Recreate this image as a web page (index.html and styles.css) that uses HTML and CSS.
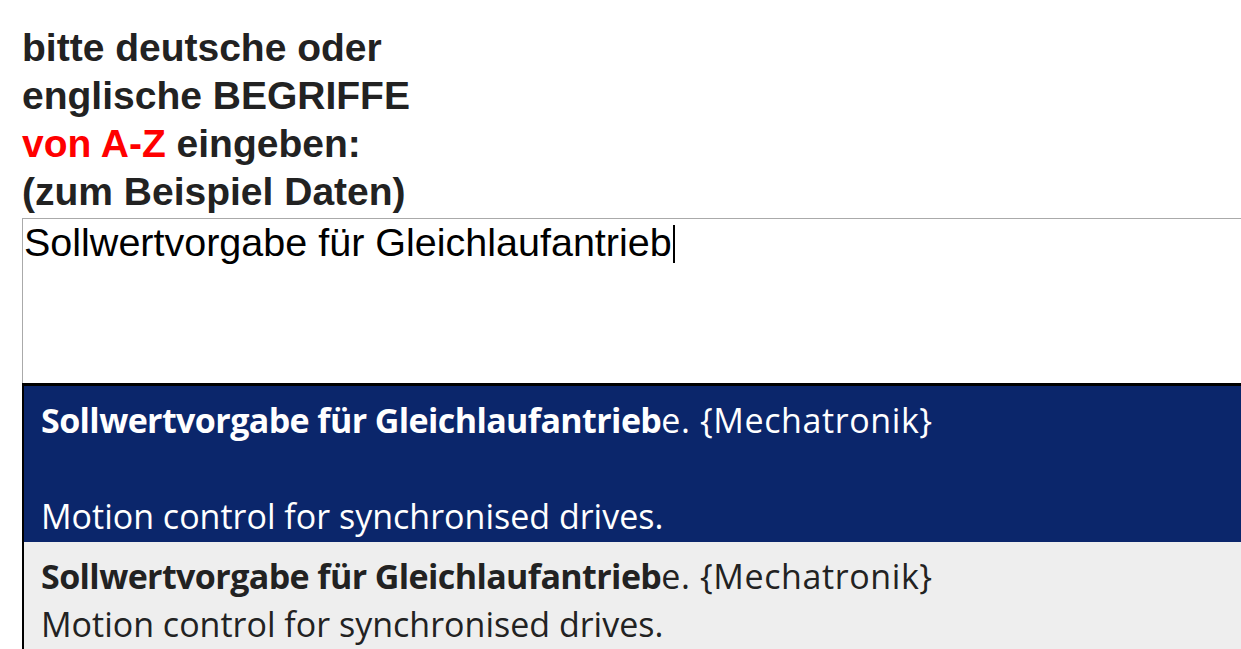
FILE: index.html
```html
<!DOCTYPE html>
<html lang="de">
<head>
	<meta charset="UTF-8">
	<title>Wörterbuch</title>
	<link rel="stylesheet" href="styles.css">
</head>
<body>
	<div class="page">
		<h1 class="hint">bitte deutsche oder<br>englische BEGRIFFE<br><span class="red">von A-Z</span> eingeben:<br>(zum Beispiel Daten)</h1>
		<div class="search">
			<div class="field">Sollwertvorgabe für Gleichlaufantrieb<span class="caret"></span></div>
			<ul class="suggest">
				<li class="item active"><b>Sollwertvorgabe für Gleichlaufantrieb</b><span class="rest">e. {Mechatronik}</span><br><br>Motion control for synchronised drives.</li>
				<li class="item"><b>Sollwertvorgabe für Gleichlaufantrieb</b><span class="rest">e. {Mechatronik}</span><br>Motion control for synchronised drives.</li>
			</ul>
		</div>
	</div>
</body>
</html>
```
FILE: styles.css
```css
*{
	margin: 0;
	padding: 0;
	list-style: none;
	box-sizing: border-box;
}
html,body{
	height: 100%;
}
body{
	overflow: hidden;
	background: #fff;
}
.page{
	padding: 24px 0 0 22px;
	width: 1400px;
	min-height: 100%;
}
.hint{
	font-family: "Liberation Sans", Arial, sans-serif;
	font-size: 39px;
	line-height: 48px;
	font-weight: bold;
	color: #222;
}
.red{
	color: #f00;
}
.search{
	position: relative;
	margin-top: 2px;
}
.field{
	height: 430px;
	border: 1px solid #aaa;
	border-right: none;
	padding: 1px 1px;
	font-family: "Liberation Sans", Arial, sans-serif;
	font-size: 39.5px;
	color: #000;
}
.caret{
	display: inline-block;
	width: 2px;
	height: 38px;
	background: #000;
	vertical-align: -7px;
	margin-left: 1px;
}
.suggest{
	position: absolute;
	left: 0;
	top: 165px;
	width: 1300px;
	border-top: 3px solid #000;
	border-left: 2px solid #000;
	font-family: "Open Sans", "Noto Sans", sans-serif;
	font-size: 34px;
	line-height: 48px;
	color: #222;
}
.item{
	padding: 10px 17px 2px;
	background: #eee;
}
.item b{
	font-weight: bold;
	letter-spacing: -0.6px;
}
.rest{
	letter-spacing: 0.6px;
}
.active{
	background: #0b266b;
	color: #fff;
}
```
